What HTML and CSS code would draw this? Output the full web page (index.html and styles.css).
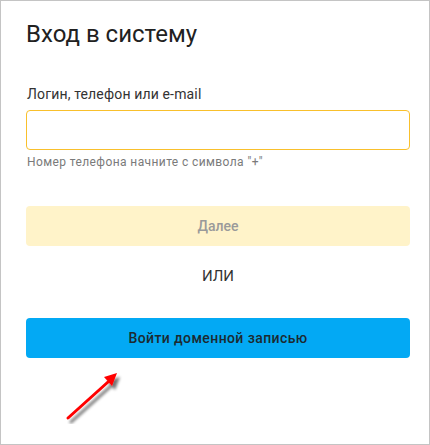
FILE: index.html
```html
<!doctype html>
<html lang="ru">
<head>
  <meta charset="UTF-8">
  <meta name="viewport" content="width=device-width, initial-scale=1.0">
  <title>Вход в систему</title>
  <link rel="stylesheet" href="styles.css">
</head>
<body>
  <div class="login-frame">
    <h1 class="title">Вход в систему</h1>
    <form class="login-form" onsubmit="return false">
      <label class="field-label" for="login">Логин, телефон или e-mail</label>
      <input class="field-input" id="login" type="text">
      <div class="field-hint">Номер телефона начните с символа "+"</div>
      <button class="btn btn-next" type="submit" disabled>Далее</button>
      <div class="divider">или</div>
      <button class="btn btn-domain" type="button">Войти доменной записью</button>
    </form>
    <!-- стрелка-подсказка -->
    <svg class="hint-arrow" width="70" height="64" viewBox="0 0 70 64">
      <defs>
        <filter id="arrowShadow" x="-30%" y="-30%" width="160%" height="160%">
          <feGaussianBlur in="SourceAlpha" stdDeviation="1.6"/>
          <feOffset dx="3" dy="4"/>
          <feComponentTransfer><feFuncA type="linear" slope="0.55"/></feComponentTransfer>
          <feMerge><feMergeNode/><feMergeNode in="SourceGraphic"/></feMerge>
        </filter>
      </defs>
      <g filter="url(#arrowShadow)">
        <line x1="6" y1="58" x2="46" y2="22" stroke="#ff0000" stroke-width="3" stroke-linecap="round"/>
        <polygon points="55,13 42,17 50,26" fill="#ff0000"/>
      </g>
    </svg>
  </div>
</body>
</html>
```

FILE: styles.css
```css
body {
  margin: 0;
  background: #ffffff;
  font-family: Roboto, 'Liberation Sans', Arial, sans-serif;
}

.login-frame {
  position: relative;
  box-sizing: border-box;
  width: 430px;
  height: 445px;
  border: 1px solid #c4c4c4;
  padding: 19px 19px 0 25px;
  background: #ffffff;
}

.title {
  margin: 0;
  font-size: 24px;
  line-height: 28px;
  font-weight: 400;
  color: #212121;
}

.login-form {
  display: flex;
  flex-direction: column;
  margin-top: 36px;
}

.field-label {
  font-size: 14px;
  line-height: 20px;
  color: #333333;
  margin-left: 1px;
  letter-spacing: 0.15px;
}

.field-input {
  box-sizing: border-box;
  height: 40px;
  margin-top: 6px;
  border: 1px solid #f9c02c;
  border-radius: 4px;
  outline: none;
  padding: 0 12px;
  font: inherit;
}

.field-hint {
  margin-top: 4px;
  font-size: 12px;
  line-height: 16px;
  color: #7a7a7a;
  margin-left: 1px;
  letter-spacing: 0.4px;
}

.btn {
  height: 40px;
  border: none;
  border-radius: 4px;
  font-family: inherit;
  font-size: 14px;
  font-weight: 500;
}

.btn-next {
  margin-top: 36px;
  background: #fff3c9;
  color: #9a9a9a;
}

.divider {
  margin-top: 20px;
  text-align: center;
  text-transform: uppercase;
  font-size: 15px;
  line-height: 20px;
  color: #333333;
}

.btn-domain {
  margin-top: 32px;
  background: #03a9f4;
  color: #1c2a30;
  letter-spacing: 0.4px;
  cursor: pointer;
}

.hint-arrow {
  position: absolute;
  left: 61px;
  top: 359px;
}
```
